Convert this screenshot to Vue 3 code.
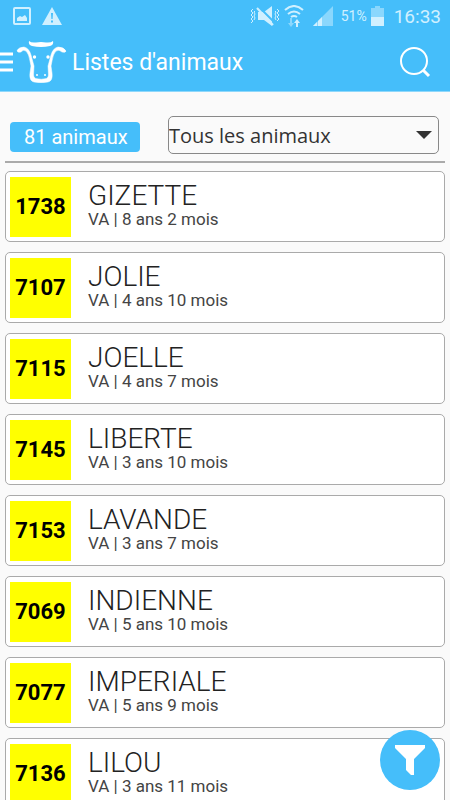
<template>
  <div class="app">
    <div class="status-bar">
      <div class="status-group">
        <svg class="picture-icon" width="18" height="18" viewBox="0 0 18 18">
          <rect x="1" y="1" width="16" height="16" rx="1" fill="none" stroke="currentColor" stroke-width="2" />
          <path d="M4 14v-3l3-2 2 1 3-2 2 3v3z" fill="currentColor" />
        </svg>
        <svg width="20" height="18" viewBox="0 0 20 18">
          <path d="M10 0L20 18H0z" fill="currentColor" />
          <path d="M9 6h2l-.4 6H9.400zM9 13.500h2v2H9z" fill="#45befa" />
        </svg>
      </div>
      <div class="status-group right">
        <svg width="30" height="22" viewBox="0 0 30 22">
          <path d="M3 4L1 6l2 2-2 2 2 2-2 2 2 2-2 2M5 6L4 7l1 2-1 2 1 2-1 2M27 4l2 2-2 2 2 2-2 2 2 2-2 2M25 6l1 1-1 2 1 2-1 2 1 2" fill="none" stroke="currentColor" stroke-width="1" />
          <path d="M8 7h6l8-6v20l-8-6H8z" fill="currentColor" />
          <path d="M8 1l17 17" stroke="#45befa" stroke-width="2" />
          <path d="M7 3l16 17" stroke="currentColor" stroke-width="2" />
        </svg>
        <svg class="wifi-icon" width="20" height="22" viewBox="0 0 20 22">
          <path d="M1 5q9-8 18 0M4 9q6-5 12 0M7 12q3-2 6 0" fill="none" stroke="currentColor" stroke-width="2" />
          <path d="M6 13h2v5h2l-3 4-3-4h2z" fill="currentColor" opacity=".5" />
          <path d="M12 22h2v-4h2l-3-4-3 4h2z" fill="currentColor" />
        </svg>
        <svg class="signal-icon" width="20" height="20" viewBox="0 0 20 20">
          <path d="M20 0v20H0z" fill="currentColor" opacity=".5" />
          <path d="M0 20l4-4v4zM5 20v-5l4-4v9z" fill="currentColor" />
        </svg>
        <span class="percent">51%</span>
        <svg class="battery-icon" width="13" height="20" viewBox="0 0 13 20">
          <path d="M0 2h4V0h5v2h4v9H0z" fill="currentColor" opacity=".5" />
          <path d="M0 11h13v9H0z" fill="currentColor" />
        </svg>
        <span class="clock">16:33</span>
      </div>
    </div>

    <header class="toolbar">
      <button class="menu-button" aria-label="Menu">
        <svg width="13" height="20" viewBox="0 0 13 20">
          <path d="M0 2h13M0 10h13M0 18h13" stroke="#fff" stroke-width="3" />
        </svg>
        <svg width="51" height="42" viewBox="0 0 51 42">
          <path d="M13 0Q15 2 20 1.500q5-1 10 0 5 .5 7-1.500 1 4-3 5-9 2-18 0-4-1-3-5z" fill="#fff" />
          <path
            d="M5 11Q1 12 1 9.500 3 6 8 6q5 1 7 8l3 11-.5 9q0 2 2 3.500 6 1.500 11 0 2-1.500 2-3.500L32 25l3-11q2-7 7-8 6 0 8 4 0 2-4 1-3-3-6-1-3 3-4 10l-1 5 1 7q1 8-4 9-7 1.500-14 0-5-1-4-9l1-7-1-5q-1-7-4-10-3-2-5 1z"
            fill="#fff" fill-rule="evenodd" stroke="#fff" stroke-width=".5"
          />
          <circle cx="18.500" cy="16" r="1.700" fill="#fff" />
          <circle cx="32" cy="16" r="1.700" fill="#fff" />
          <circle cx="21" cy="34" r="1" fill="#fff" />
          <circle cx="29" cy="34" r="1" fill="#fff" />
        </svg>
      </button>
      <h1>Listes d'animaux</h1>
      <button class="search-button" aria-label="Rechercher">
        <svg width="32" height="32" viewBox="0 0 32 32">
          <circle cx="15" cy="15" r="13" fill="none" stroke="#fff" stroke-width="2" />
          <path d="M24 24l6 6" stroke="#fff" stroke-width="3" />
        </svg>
      </button>
    </header>

    <div class="filters">
      <span class="count">81 animaux</span>
      <div class="select-box">
        <select v-model="selectedList" aria-label="Liste">
          <option value="all">Tous les animaux</option>
        </select>
        <svg class="arrow" width="16" height="8" viewBox="0 0 16 8">
          <path d="M0 0h16L8 8z" fill="#333" />
        </svg>
      </div>
    </div>

    <ul class="animals">
      <li class="animal" v-for="animal in animals" :key="animal.number">
        <span class="number">{{ animal.number }}</span>
        <div class="details">
          <span class="name">{{ animal.name }}</span>
          <span class="age">VA | {{ animal.age }}</span>
        </div>
      </li>
    </ul>

    <button class="filter-button" aria-label="Filtrer">
      <svg width="30" height="30" viewBox="0 0 30 30">
        <path d="M0 0h30v3L19 14v16h-3l-5-5V14L0 3z" fill="#fff" />
      </svg>
    </button>
  </div>
</template>

<script setup>
import { ref } from "vue";

const selectedList = ref("all");

const animals = ref([
  { number: "1738", name: "GIZETTE", age: "8 ans 2 mois" },
  { number: "7107", name: "JOLIE", age: "4 ans 10 mois" },
  { number: "7115", name: "JOELLE", age: "4 ans 7 mois" },
  { number: "7145", name: "LIBERTE", age: "3 ans 10 mois" },
  { number: "7153", name: "LAVANDE", age: "3 ans 7 mois" },
  { number: "7069", name: "INDIENNE", age: "5 ans 10 mois" },
  { number: "7077", name: "IMPERIALE", age: "5 ans 9 mois" },
  { number: "7136", name: "LILOU", age: "3 ans 11 mois" },
]);
</script>

<style>
body {
  background: #fafafa;
}
</style>

<style scoped>
* {
  box-sizing: border-box;
}

.app {
  display: flex;
  flex-direction: column;
  height: 100vh;
  overflow: hidden;
  font-family: Roboto, sans-serif;
  color: #222;
}

svg {
  display: block;
  flex: none;
}

button {
  display: flex;
  align-items: center;
  padding: 0;
  border: none;
  background: none;
  cursor: pointer;
}

.status-bar {
  display: flex;
  flex: none;
  justify-content: space-between;
  height: 32px;
  padding: 0 9px 0 13px;
  background: #45befa;
  color: #d0f0ff;
}

.status-group {
  display: flex;
  align-items: center;
  gap: 11px;
}

.status-group.right {
  gap: 4px;
}

.signal-icon {
  margin: 0 4px 0 5px;
}

.percent {
  font-size: 14px;
}

.clock {
  margin-left: 6px;
  font-size: 19px;
}

.toolbar {
  display: flex;
  flex: none;
  align-items: center;
  height: 60px;
  padding-right: 19px;
  border-bottom: 1px solid #8fd8fb;
  background: #45befa;
}

.menu-button {
  gap: 3px;
}

h1 {
  flex: 1;
  margin: 2px 0 0 5px;
  font-size: 23px;
  font-weight: 400;
  color: #fff;
}

.filters {
  display: flex;
  flex: none;
  align-items: center;
  gap: 28px;
  margin: 0 5px;
  padding: 24px 6px 7px 5px;
  border-bottom: 2px solid #aaa;
}

.count {
  width: 130px;
  margin-top: 4px;
  padding-left: 14px;
  border-radius: 4px;
  background: #45befa;
  font-size: 20px;
  line-height: 30px;
  color: #fff;
}

.select-box {
  position: relative;
  flex: 1;
}

select {
  display: block;
  width: 100%;
  height: 38px;
  padding: 0;
  border: 1px solid #888;
  border-radius: 5px;
  appearance: none;
  background: #fafafa;
  font-family: "Open Sans", sans-serif;
  font-size: 20px;
  color: #333;
}

.arrow {
  position: absolute;
  top: 15px;
  right: 7px;
  pointer-events: none;
}

.animals {
  display: flex;
  flex: 1;
  flex-direction: column;
  gap: 10px;
  min-height: 0;
  margin: 0;
  padding: 8px 5px;
  overflow-y: auto;
  scrollbar-width: none;
  list-style: none;
}

.animal {
  display: flex;
  flex: none;
  gap: 17px;
  padding: 5px 4px 4px;
  border: 1px solid #aaa;
  border-radius: 5px;
  background: #fff;
}

.number {
  width: 61px;
  background: #ff0;
  font-size: 22px;
  font-weight: 700;
  line-height: 60px;
  text-align: center;
  color: #000;
}

.details {
  display: flex;
  flex-direction: column;
  padding-top: 3px;
}

.name {
  font-size: 28px;
  font-weight: 300;
  line-height: 32px;
}

.age {
  font-size: 17px;
  line-height: 14px;
  color: #444;
}

.filter-button {
  position: fixed;
  right: 10px;
  bottom: 10px;
  justify-content: center;
  width: 60px;
  height: 60px;
  border-radius: 50%;
  background: #45befa;
}
</style>
